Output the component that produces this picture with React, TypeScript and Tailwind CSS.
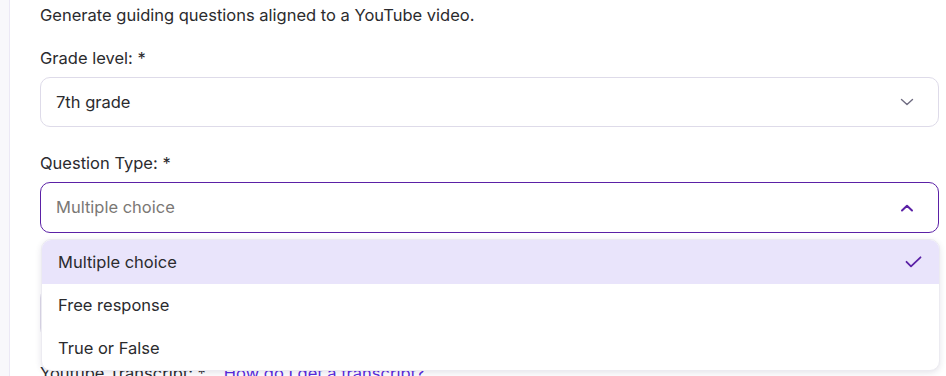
import React from 'react';

const options = ['Multiple choice', 'Free response', 'True or False'];

const ChevronDown = () => (
  <svg width="14" height="8" viewBox="0 0 14 8" fill="none" stroke="#6e6b80" strokeWidth="1.4" strokeLinecap="round" strokeLinejoin="round">
    <path d="M1.5 1.5 7 6.5 12.5 1.5" />
  </svg>
);

const ChevronUp = () => (
  <svg width="14" height="8" viewBox="0 0 14 8" fill="none" stroke="#5b21a6" strokeWidth="2" strokeLinecap="round" strokeLinejoin="round">
    <path d="M2 6.5 7 1.8 12 6.5" />
  </svg>
);

const Check = () => (
  <svg width="17" height="12" viewBox="0 0 17 12" fill="none" stroke="#5b21a6" strokeWidth="1.8" strokeLinecap="round" strokeLinejoin="round">
    <path d="M1.5 5.8 6 10.3 15.5 1.3" />
  </svg>
);

const App = () => {
  return (
    <div className="flex w-[946px] h-[376px] overflow-hidden bg-white text-[#2b2b2e]" style={{ fontFamily: 'Inter, "Noto Sans", sans-serif' }}>
      <div className="w-[10px] shrink-0 bg-[#f8f8fb] border-r border-[#ebe8f5]"></div>
      <div className="flex-1 pl-[30px] pr-[7px] pt-[3px] text-[16.5px]">
        <p className="leading-6">Generate guiding questions aligned to a YouTube video.</p>

        <label className="block mt-[19px] leading-6">Grade level: *</label>
        <div className="mt-[7px] h-[50px] flex items-center justify-between px-[15px] pr-[24px] rounded-[10px] border border-[#dedbe9] bg-white">
          <span>7th grade</span>
          <ChevronDown />
        </div>

        <label className="block mt-[24px] leading-6">Question Type: *</label>
        <div className="relative mt-[7px]">
          <div className="h-[51px] flex items-center justify-between px-[15px] pr-[24px] rounded-[10px] border border-[#5b21a6] bg-white">
            <span className="text-[#7b7875]">Multiple choice</span>
            <ChevronUp />
          </div>

          <div className="absolute left-px right-[-1px] top-[57px] z-10 rounded-[10px] bg-white border border-[#ecebf1] shadow-[0_2px_6px_rgba(40,30,80,0.12)] overflow-hidden">
            {options.map((o, i) => (
              <div key={o} className={`flex items-center justify-between pl-[16px] pr-[17px] ${i === 0 ? 'h-[44px] bg-[#e9e4fb]' : 'h-[43px]'}`}>
                <span>{o}</span>
                {i === 0 && <Check />}
              </div>
            ))}
          </div>
        </div>

        <div className="mt-[24px] h-6"></div>
        <div className="mt-[7px] h-[50px] rounded-[10px] border border-[#dedbe9] bg-white"></div>

        <div className="mt-[23px] leading-6 flex gap-[18px]">
          <span>Youtube Transcript: *</span>
          <a className="text-[#5a2be0]" href="#">How do I get a transcript?</a>
        </div>
      </div>
    </div>
  );
};

export default App;
